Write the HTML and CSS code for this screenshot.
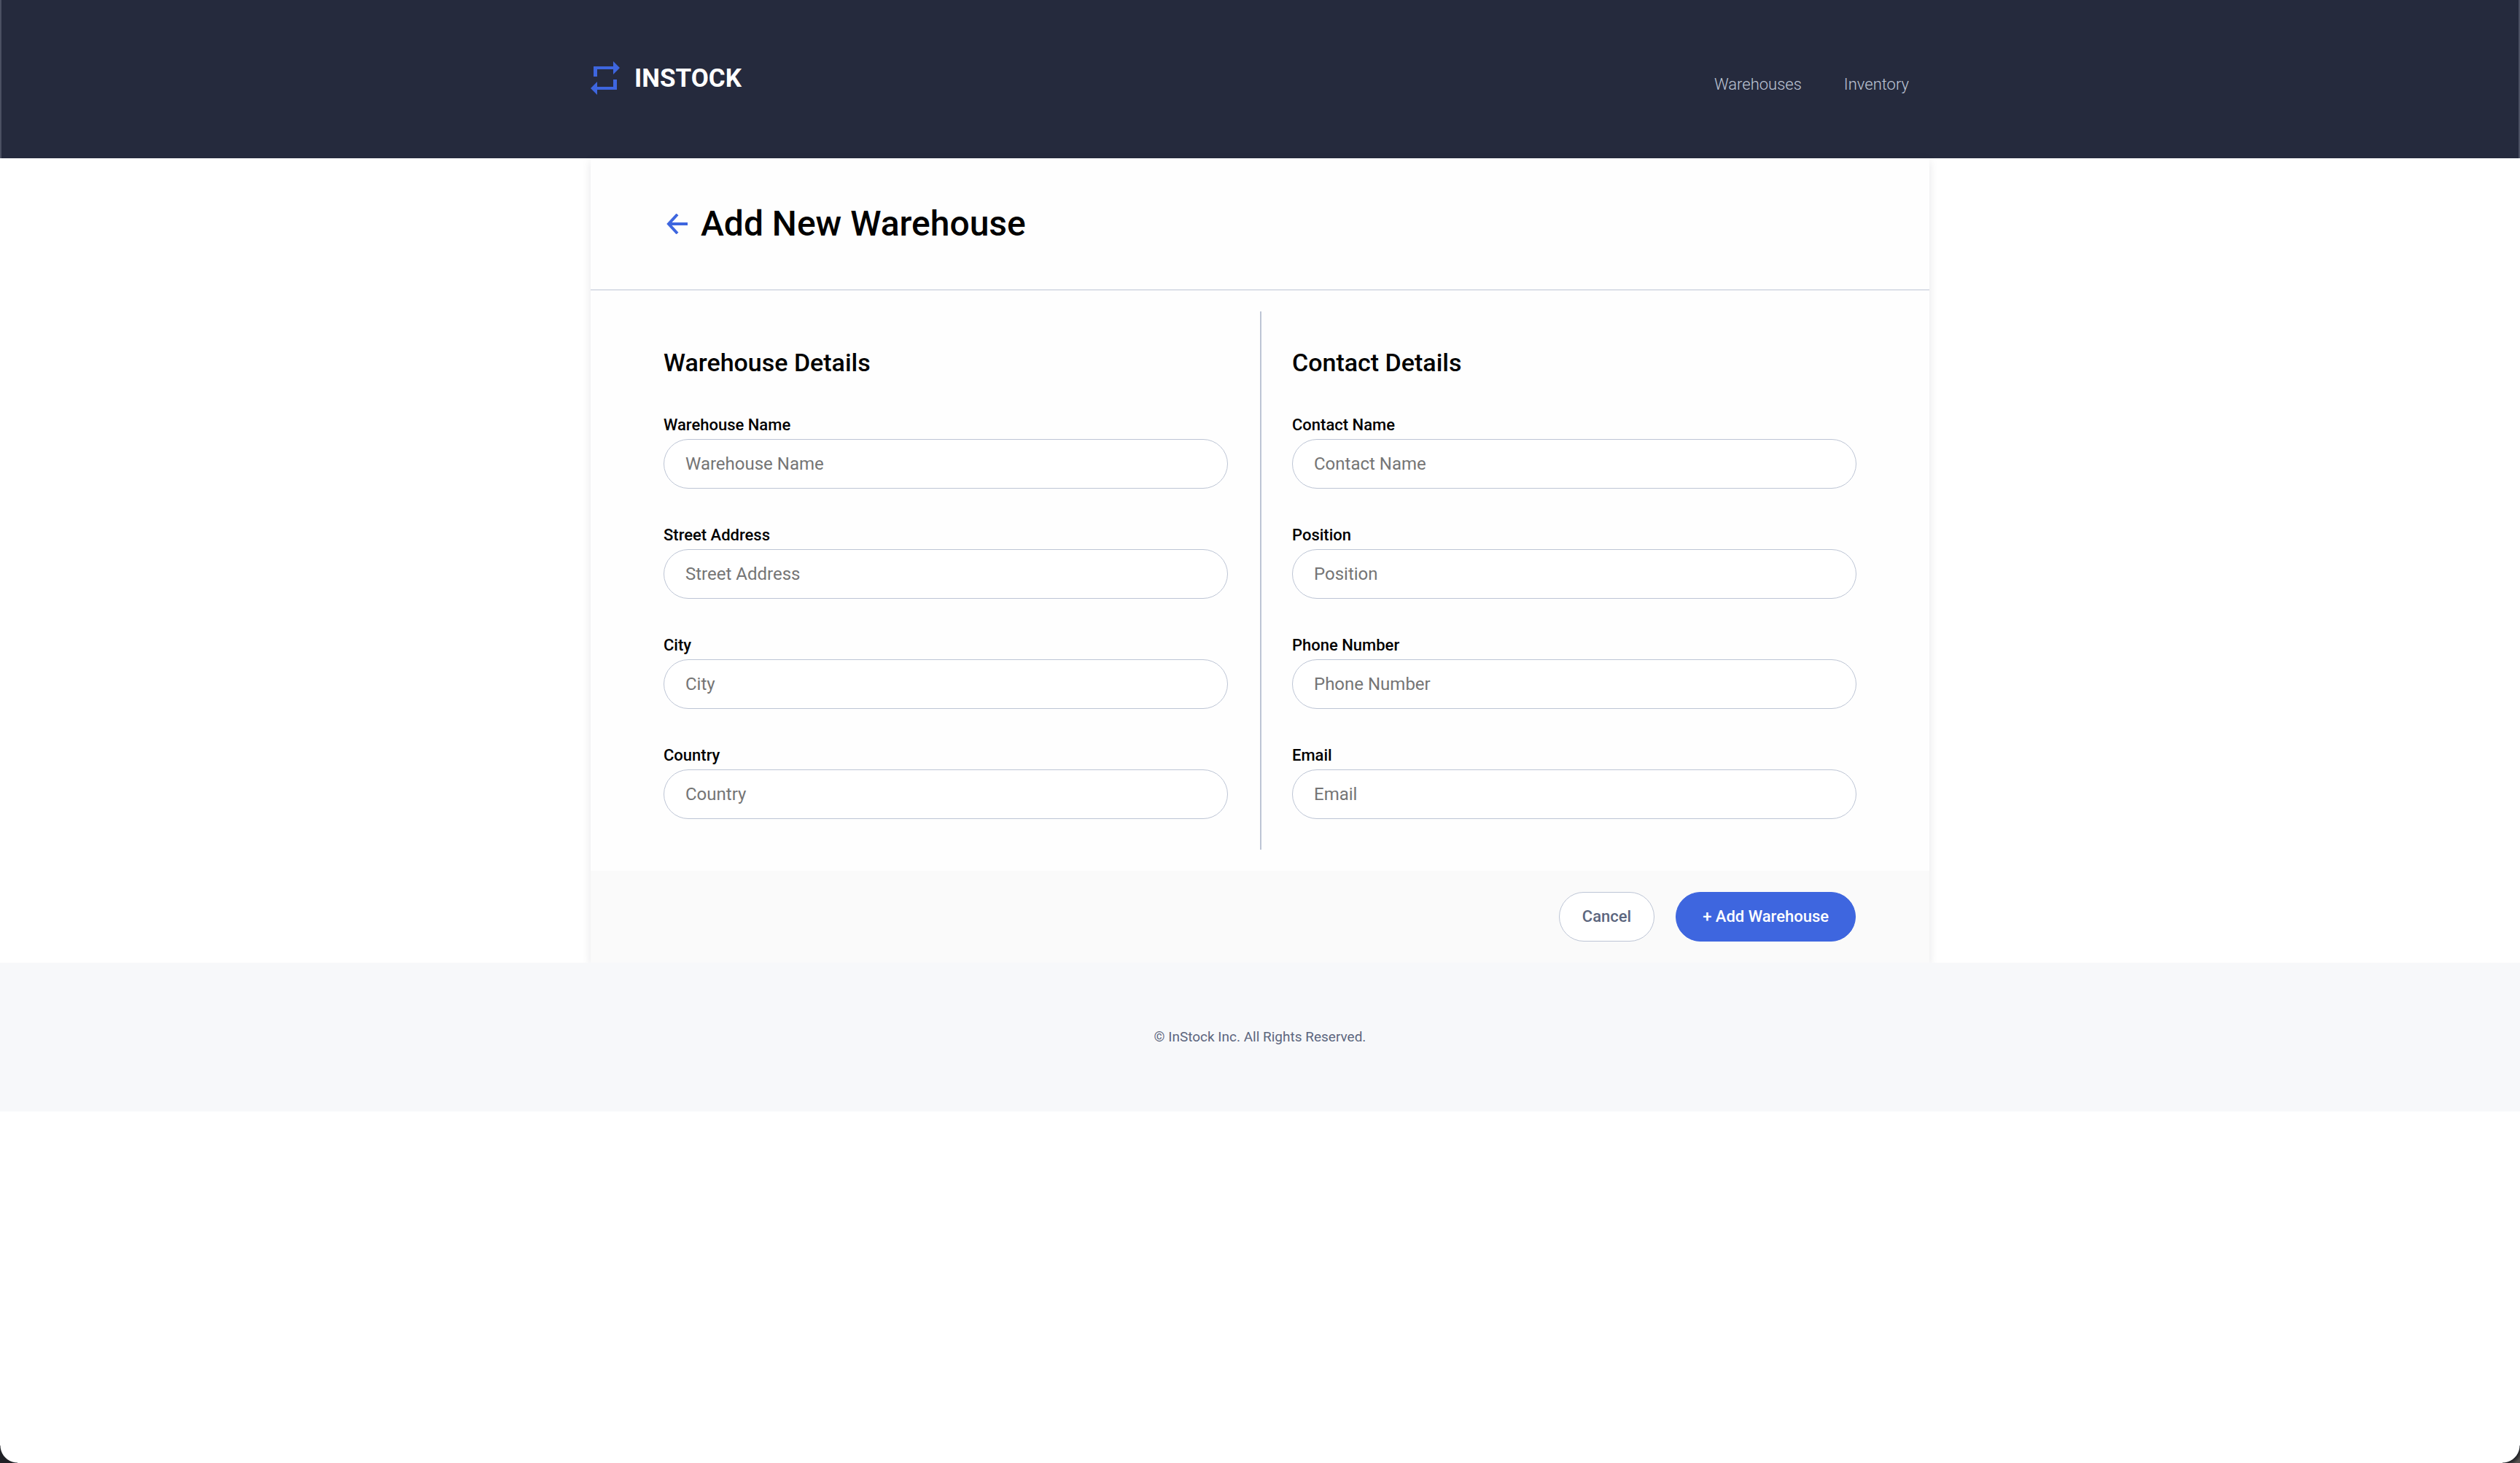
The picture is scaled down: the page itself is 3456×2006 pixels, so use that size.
FILE: index.html
```html
<!DOCTYPE html>
<html lang="en">
<head>
<meta charset="utf-8">
<meta name="viewport" content="width=device-width, initial-scale=1">
<title>InStock</title>
<link rel="stylesheet" href="styles.css">
</head>
<body>
<header class="header">
  <div class="header__inner">
    <a class="logo" href="#">
      <svg class="logo__mark" viewBox="0 0 40 46" aria-hidden="true">
        <path fill="currentColor" d="M4 7h27V0l9 9-9 9v-7H9v10H4zM36 25v14H9v7l-9-9 9-9v7h22V25z"/>
      </svg>
      <span class="logo__text">INSTOCK</span>
    </a>
    <nav class="nav">
      <a class="nav__link" href="#">Warehouses</a>
      <a class="nav__link" href="#">Inventory</a>
    </nav>
  </div>
</header>
<main class="main">
  <form class="card">
    <div class="card__head">
      <a class="back" href="#" aria-label="Back">
        <svg class="back__icon" viewBox="0 0 29 28" aria-hidden="true">
          <path fill="none" stroke="currentColor" stroke-width="4" d="M29 14H3M15 1L3 14l12 13"/>
        </svg>
      </a>
      <h1 class="card__title">Add New Warehouse</h1>
    </div>
    <div class="card__body">
      <section class="group">
        <h2 class="group__title">Warehouse Details</h2>
        <div class="field"><label class="field__label" for="warehouse">Warehouse Name</label><input class="field__input" id="warehouse" type="text" placeholder="Warehouse Name"></div>
        <div class="field"><label class="field__label" for="address">Street Address</label><input class="field__input" id="address" type="text" placeholder="Street Address"></div>
        <div class="field"><label class="field__label" for="city">City</label><input class="field__input" id="city" type="text" placeholder="City"></div>
        <div class="field"><label class="field__label" for="country">Country</label><input class="field__input" id="country" type="text" placeholder="Country"></div>
      </section>
      <section class="group group--contact">
        <h2 class="group__title">Contact Details</h2>
        <div class="field"><label class="field__label" for="contact">Contact Name</label><input class="field__input" id="contact" type="text" placeholder="Contact Name"></div>
        <div class="field"><label class="field__label" for="position">Position</label><input class="field__input" id="position" type="text" placeholder="Position"></div>
        <div class="field"><label class="field__label" for="phone">Phone Number</label><input class="field__input" id="phone" type="tel" placeholder="Phone Number"></div>
        <div class="field"><label class="field__label" for="email">Email</label><input class="field__input" id="email" type="email" placeholder="Email"></div>
      </section>
    </div>
    <div class="card__actions">
      <button class="button button--secondary" type="button">Cancel</button>
      <button class="button button--primary" type="submit">+ Add Warehouse</button>
    </div>
  </form>
</main>
<footer class="footer">© InStock Inc. All Rights Reserved.</footer>
<div class="corner corner--left"></div>
<div class="corner corner--right"></div>
</body>
</html>
```
FILE: styles.css
```css
* {
  box-sizing: border-box;
}

body {
  margin: 0;
  background: #fff;
  color: #000;
  font-family: Roboto, "Liberation Sans", sans-serif;
  font-size: 24px;
  line-height: 32px;
}

a {
  color: inherit;
  text-decoration: none;
}

.header {
  background: #252a3d;
  border: solid #4b5062;
  border-width: 0 2px;
}

.header__inner {
  display: flex;
  justify-content: space-between;
  align-items: flex-start;
  max-width: 1836px;
  margin: 0 auto;
  padding: 84px 28px 85px 0;
}

.logo {
  display: flex;
  gap: 20px;
  color: #3e66df;
}

.logo__mark {
  width: 40px;
  height: 46px;
}

.logo__text {
  color: #fff;
  font-size: 35px;
  font-weight: 700;
  line-height: 48px;
}

.nav {
  display: flex;
  gap: 58px;
  padding-top: 16px;
  color: #bdc5d5;
  font-size: 22px;
  font-weight: 300;
}

.card {
  max-width: 1836px;
  margin: 0 auto;
  background: #fefefe;
  box-shadow: 0 4px 12px rgba(19, 24, 44, 0.1);
}

.card__head {
  display: flex;
  align-items: center;
  gap: 18px;
  padding: 58px 104px;
  border-bottom: 1px solid #bdc5d5;
}

.back {
  display: flex;
  color: #3e66df;
}

.back__icon {
  width: 29px;
  height: 28px;
}

.card__title {
  margin: 0;
  font-size: 48px;
  font-weight: 500;
  line-height: 64px;
}

.card__body {
  display: grid;
  grid-template-columns: 1fr 1fr;
  padding: 29px 100px;
}

.group {
  padding: 46px 44px 42px 0;
}

.group--contact {
  padding: 46px 0 42px 42px;
  border-left: 2px solid #bdc5d5;
}

.group__title {
  margin: 0 0 48px;
  font-size: 34px;
  font-weight: 500;
  line-height: 48px;
}

.field {
  margin-bottom: 50px;
}

.field:last-child {
  margin-bottom: 0;
}

.field__label {
  display: block;
  margin-bottom: 5px;
  font-size: 22px;
  font-weight: 500;
  line-height: 28px;
}

.field__input {
  display: block;
  width: 100%;
  height: 68px;
  padding: 0 29px;
  border: 1px solid #bdc5d5;
  border-radius: 34px;
  background: #fff;
  color: #000;
  font: inherit;
}

.field__input::placeholder {
  color: #757575;
  opacity: 1;
}

.card__actions {
  display: flex;
  justify-content: flex-end;
  gap: 29px;
  padding: 29px 101px;
  background: #fafafa;
}

.button {
  height: 68px;
  padding: 0 31px;
  border: 1px solid #bdc5d5;
  border-radius: 34px;
  font: inherit;
  font-size: 22px;
  font-weight: 500;
}

.button--secondary {
  background: #fff;
  color: #5c667e;
}

.button--primary {
  padding: 0 36px;
  border-color: #3e66df;
  background: #3e66df;
  color: #fff;
}

.footer {
  position: relative;
  padding: 86px 32px;
  background: #f7f8fa;
  color: #5c667e;
  font-size: 19px;
  text-align: center;
}

.corner {
  position: fixed;
  bottom: 0;
  width: 24px;
  height: 24px;
}

.corner--left {
  left: 0;
  background: radial-gradient(circle at 100% 0, transparent 23px, #202126 24px);
}

.corner--right {
  right: 0;
  background: radial-gradient(circle at 0 0, transparent 23px, #202126 24px, #55514f 30px);
}
```
